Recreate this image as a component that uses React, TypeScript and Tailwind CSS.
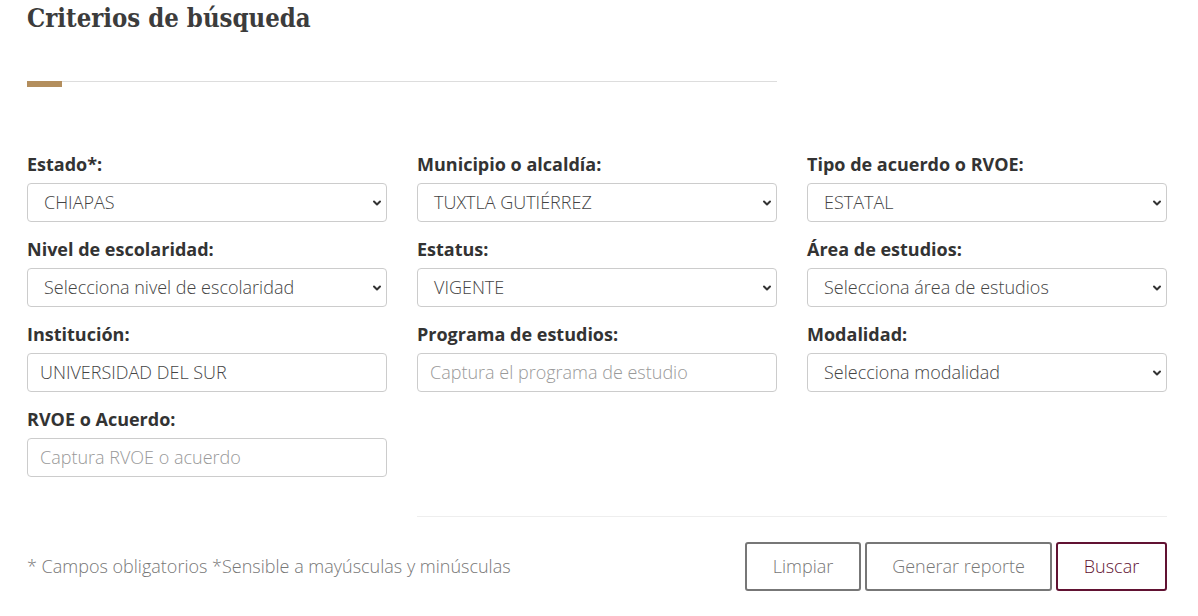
import { ChevronDown } from 'lucide-react'

const font = { fontFamily: '"Open Sans", "Liberation Sans", sans-serif' }

interface FieldProps {
  label: string
  value?: string
  placeholder?: string
  select?: boolean
}

const Field = ({ label, value, placeholder, select }: FieldProps) => (
  <div className="flex flex-col">
    <label className="text-[18px] leading-[22px] font-bold text-[#333]">{label}</label>
    {select ? (
      <div className="relative mt-[8px] h-[39px] rounded-[4px] border border-[#ccc] bg-white flex items-center pl-[16px]">
        <span className="text-[18px] font-light text-[#444]">{value}</span>
        <ChevronDown size={12} strokeWidth={4} className="absolute right-[3px] top-[13px] text-[#333]" />
      </div>
    ) : (
      <div className="mt-[8px] h-[39px] rounded-[4px] border border-[#ccc] bg-white flex items-center pl-[12px]">
        {value ? (
          <span className="text-[18px] font-light text-[#444]">{value}</span>
        ) : (
          <span className="text-[18px] font-light text-[#999]">{placeholder}</span>
        )}
      </div>
    )}
  </div>
)

export default function App() {
  return (
    <div className="w-[1198px] h-[616px] bg-white overflow-hidden" style={font}>
      <div className="w-[1140px] ml-[27px]">
        <h2
          className="text-[25.5px] leading-[36px] font-bold font-stretch-condensed text-[#3c3c3c]"
          style={{ fontFamily: '"DejaVu Serif", "Liberation Serif", serif' }}
        >
          Criterios de búsqueda
        </h2>
        <div className="w-[750px] mt-[45px] border-t border-[#ddd]">
          <div className="w-[35px] h-[6px] bg-[#b38e5d] -mt-px" />
        </div>

        <div className="grid grid-cols-3 gap-x-[30px] gap-y-[16px] mt-[66px]">
          <Field label="Estado*:" value="CHIAPAS" select />
          <Field label="Municipio o alcaldía:" value="TUXTLA GUTIÉRREZ" select />
          <Field label="Tipo de acuerdo o RVOE:" value="ESTATAL" select />
          <Field label="Nivel de escolaridad:" value="Selecciona nivel de escolaridad" select />
          <Field label="Estatus:" value="VIGENTE" select />
          <Field label="Área de estudios:" value="Selecciona área de estudios" select />
          <Field label="Institución:" value="UNIVERSIDAD DEL SUR" />
          <Field label="Programa de estudios:" placeholder="Captura el programa de estudio" />
          <Field label="Modalidad:" value="Selecciona modalidad" select />
          <Field label="RVOE o Acuerdo:" placeholder="Captura RVOE o acuerdo" />
        </div>

        <div className="ml-[390px] w-[750px] border-t border-[#eee] mt-[39px]" />

        <div className="flex items-center justify-between mt-[25px]">
          <p className="text-[18px] font-light text-[#777]">* Campos obligatorios *Sensible a mayúsculas y minúsculas</p>
          <div className="flex gap-[4px]">
            <button className="w-[116px] h-[49px] border-2 border-[#777] rounded-[3px] text-[18px] font-light text-[#777]">
              Limpiar
            </button>
            <button className="w-[187px] h-[49px] border-2 border-[#777] rounded-[3px] text-[18px] font-light text-[#777]">
              Generar reporte
            </button>
            <button className="w-[111px] h-[49px] border-2 border-[#611232] rounded-[3px] text-[18px] font-light text-[#611232]">
              Buscar
            </button>
          </div>
        </div>
      </div>
    </div>
  )
}
